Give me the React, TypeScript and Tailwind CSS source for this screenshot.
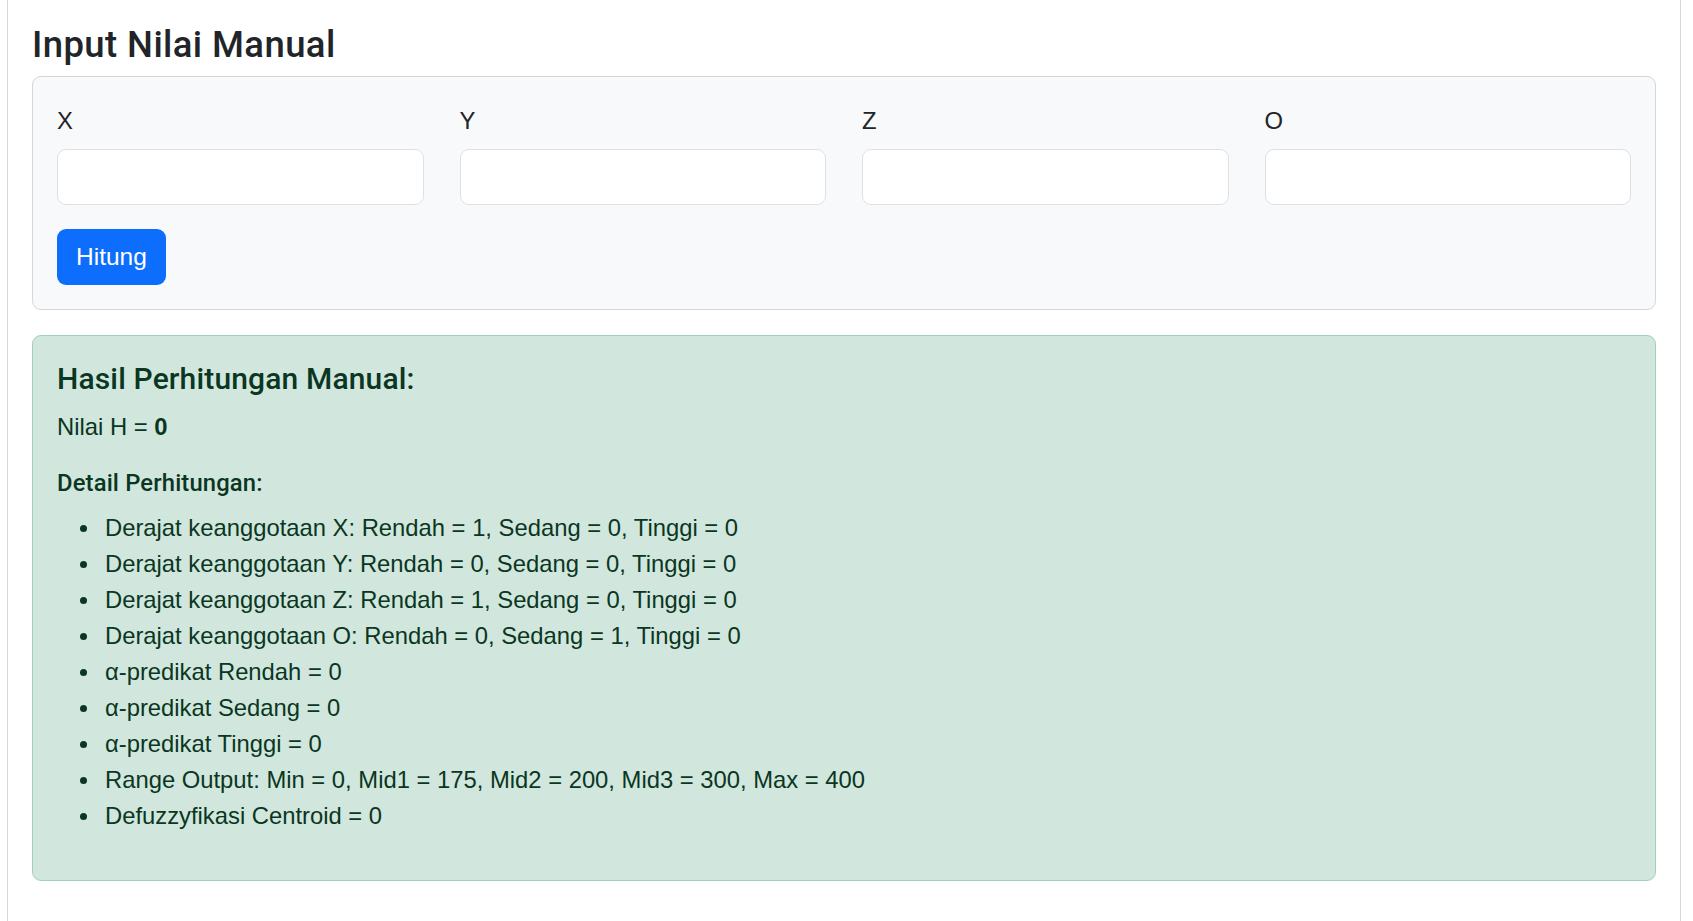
import { useState } from "react";

const fields = ["X", "Y", "Z", "O"];

const details = [
  "Derajat keanggotaan X: Rendah = 1, Sedang = 0, Tinggi = 0",
  "Derajat keanggotaan Y: Rendah = 0, Sedang = 0, Tinggi = 0",
  "Derajat keanggotaan Z: Rendah = 1, Sedang = 0, Tinggi = 0",
  "Derajat keanggotaan O: Rendah = 0, Sedang = 1, Tinggi = 0",
  "α-predikat Rendah = 0",
  "α-predikat Sedang = 0",
  "α-predikat Tinggi = 0",
  "Range Output: Min = 0, Mid1 = 175, Mid2 = 200, Mid3 = 300, Max = 400",
  "Defuzzyfikasi Centroid = 0",
];

export default function App() {
  const [values, setValues] = useState<Record<string, string>>({});

  return (
    <div className="min-h-screen bg-white font-['Liberation_Sans',Arial,sans-serif] text-[23.8px] leading-[36px] text-[#212529]">
      <div className="ml-[7px] min-h-screen w-[1674px] border-x border-[#d6d6d6] px-6 pt-[23px]">
        <h2 className="mb-[10px] font-['Roboto',sans-serif] text-[36.5px] font-medium leading-[43px] tracking-[0.4px]">
          Input Nilai Manual
        </h2>

        <div className="rounded-[9px] border border-[#d3d6da] bg-[#f8f9fa] px-6 pt-[26px] pb-6">
          <div className="grid grid-cols-4 gap-x-9">
            {fields.map((name) => (
              <div key={name}>
                <label className="mb-[10px] block">{name}</label>
                <input
                  type="number"
                  value={values[name] ?? ""}
                  onChange={(e) =>
                    setValues({ ...values, [name]: e.target.value })
                  }
                  className="block h-[56px] w-full rounded-[9px] border border-[#dee2e6] bg-white px-[18px] outline-none"
                />
              </div>
            ))}
          </div>
          <button className="mt-[24px] h-[56px] rounded-[9px] bg-[#0d6efd] px-[19px] text-[24.5px] text-white">
            Hitung
          </button>
        </div>

        <div className="mt-[25px] rounded-[9px] border border-[#a3cfbb] bg-[#d1e7dd] px-6 pt-[25px] pb-[46px] text-[#0a3622]">
          <h5 className="mb-3 font-['Roboto',sans-serif] text-[30px] font-medium leading-[36px] tracking-[0.15px]">
            Hasil Perhitungan Manual:
          </h5>
          <p className="mb-5">
            Nilai H = <strong>0</strong>
          </p>
          <h6 className="mb-[9px] font-['Roboto',sans-serif] font-medium tracking-[0.15px]">
            Detail Perhitungan:
          </h6>
          <ul className="pl-12">
            {details.map((item) => (
              <li
                key={item}
                className="relative before:absolute before:top-[15px] before:left-[-25px] before:h-[7px] before:w-[7px] before:rounded-full before:bg-[#0a3622] before:content-['']"
              >
                {item}
              </li>
            ))}
          </ul>
        </div>
      </div>
    </div>
  );
}
